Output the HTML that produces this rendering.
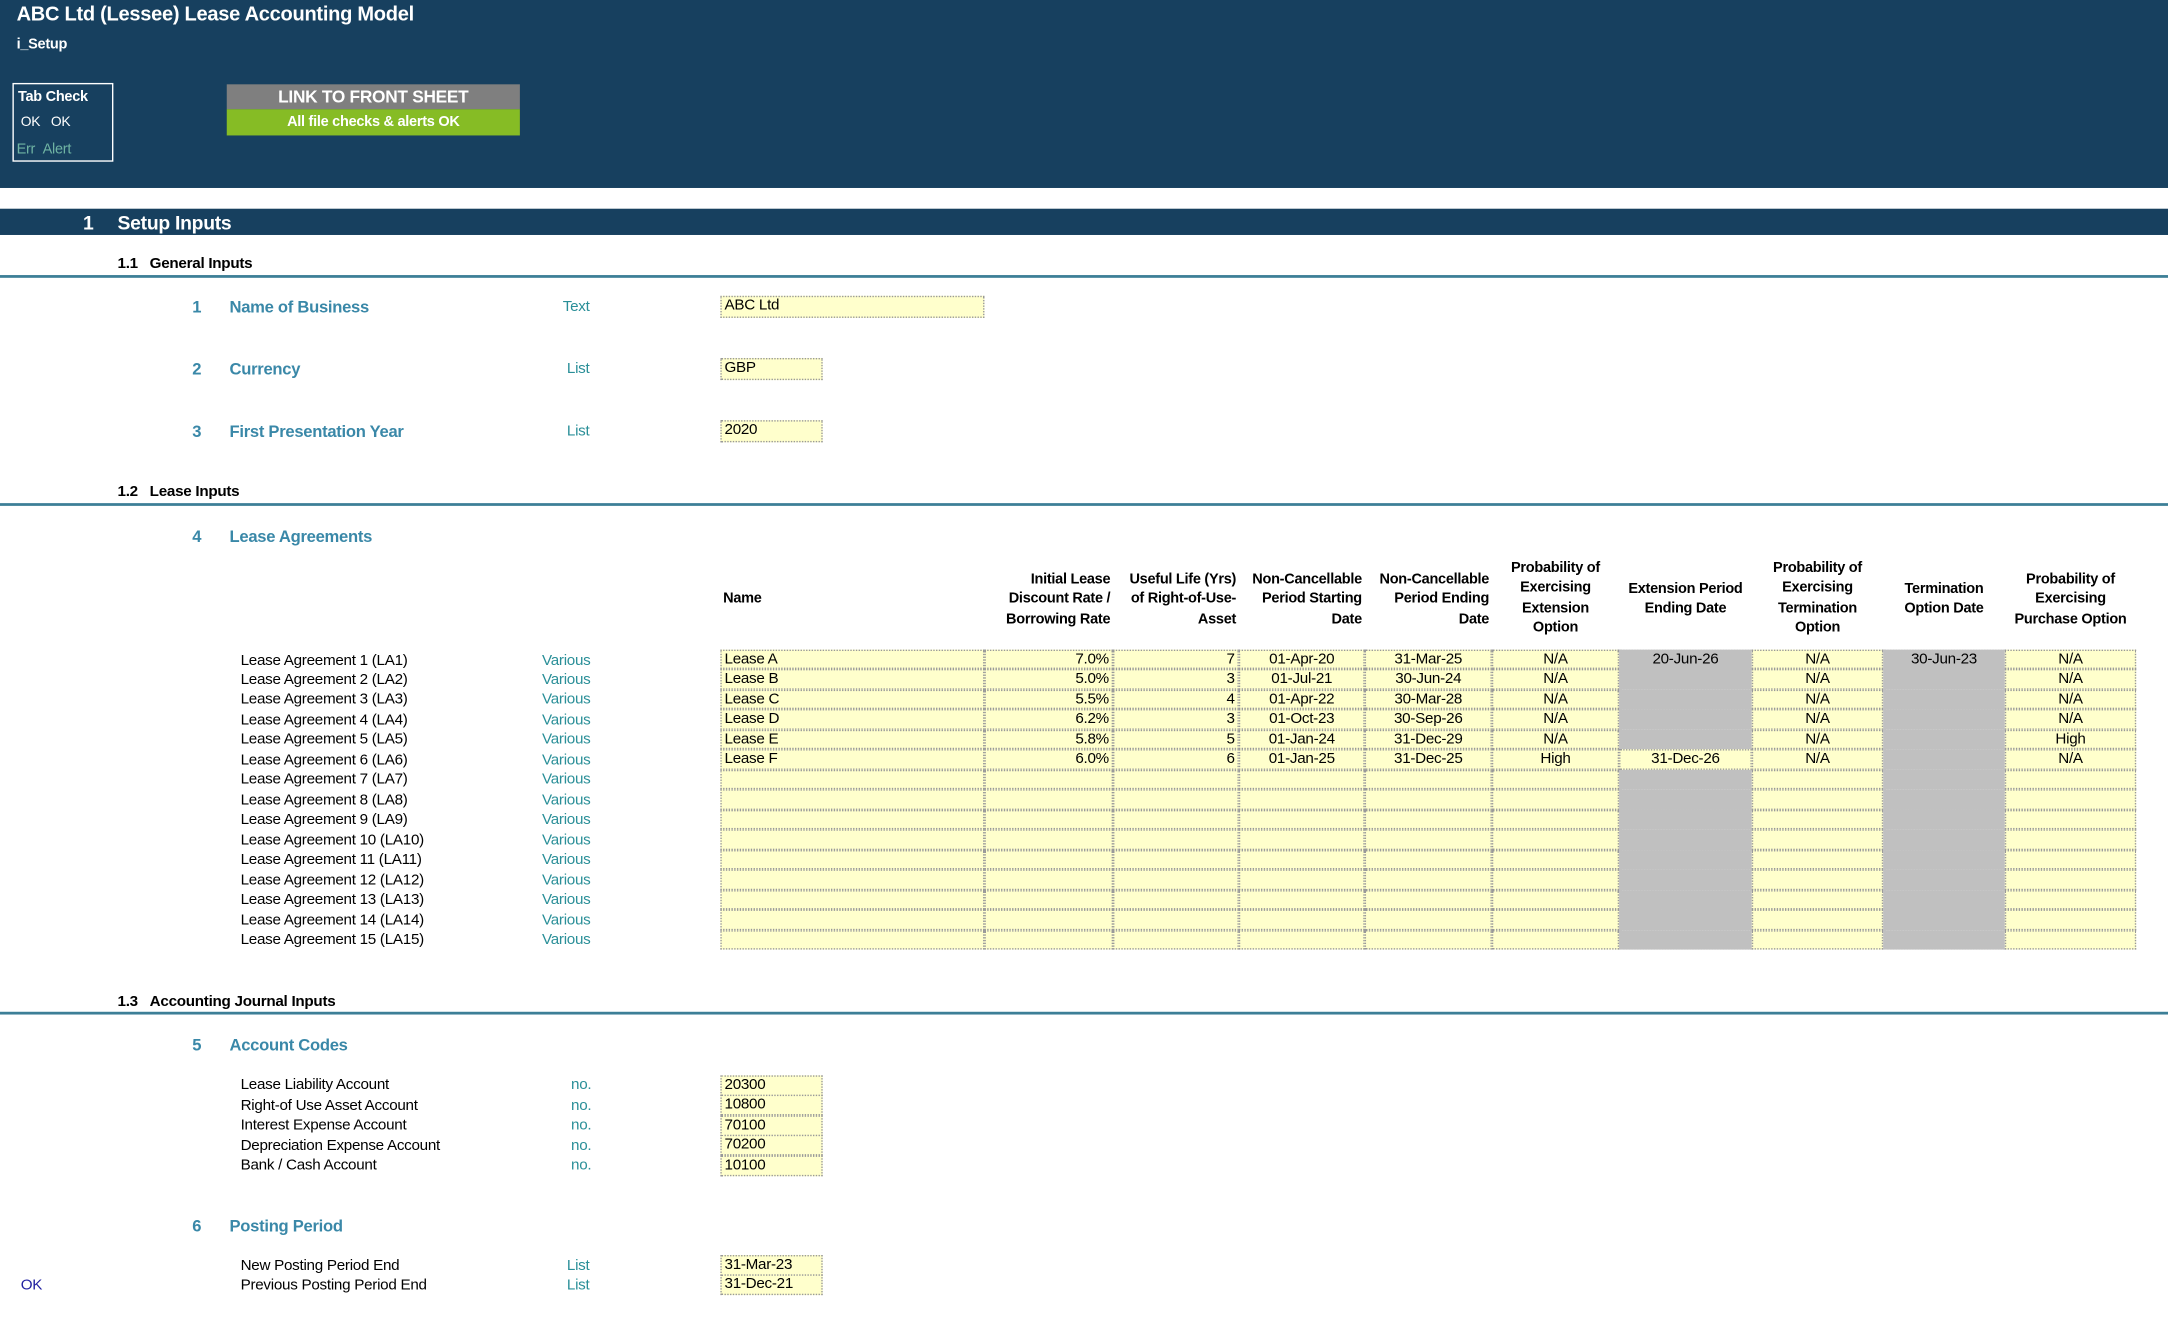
<!DOCTYPE html>
<html><head><meta charset="utf-8">
<style>
html,body{margin:0;padding:0;background:#fff;width:2168px;height:1320px;overflow:hidden}
#w{position:absolute;left:0;top:0;width:1568px;height:955px;transform:scale(1.38265,1.3822);transform-origin:0 0;font-family:"Liberation Sans",Arial,sans-serif;font-size:11px;color:#000;letter-spacing:-0.2px}
.a{position:absolute;white-space:nowrap;line-height:14px}
.b{font-weight:bold}
.lab{color:#3a88a8;font-weight:bold;font-size:12px}
.ty{color:#2a8f98}
.in{position:absolute;background:#ffffcc;border:1px dotted #999;box-sizing:border-box;line-height:13px;padding:0 2px;overflow:hidden;white-space:nowrap}
.g{background:#c0c0c0}
.hd{position:absolute;font-weight:bold;font-size:10.5px;line-height:14.3px;text-align:right}
.c{text-align:center}.r{text-align:right}
.ln{position:absolute;left:0;width:1568px;height:1.5px;background:#3d7f97}
</style></head><body><div id="w">
<div style="position:absolute;left:0;top:0;width:1568px;height:136px;background:#17405f"></div>
<div class="a b" style="left:12px;top:3px;color:#fff;font-size:14.5px;line-height:16px">ABC Ltd (Lessee) Lease Accounting Model</div>
<div class="a b" style="left:12px;top:25px;color:#fff;font-size:10.5px">i_Setup</div>
<div style="position:absolute;left:9px;top:60px;width:73px;height:57px;border:1px solid #fff;box-sizing:border-box"></div>
<div class="a b" style="left:13px;top:63px;color:#fff;font-size:10.5px">Tab Check</div>
<div class="a" style="left:15px;top:82px;color:#fff;font-size:10px">OK&nbsp;&nbsp;&nbsp;OK</div>
<div class="a" style="left:12px;top:101px;color:#6fb3a3;font-size:10.5px">Err&nbsp;&nbsp;Alert</div>
<div style="position:absolute;left:164px;top:61px;width:212px;height:18px;background:#7f7f7f;color:#fff;font-weight:bold;font-size:12.5px;text-align:center;line-height:19px">LINK TO FRONT SHEET</div>
<div style="position:absolute;left:164px;top:79px;width:212px;height:19px;background:#86bc25;color:#fff;font-weight:bold;font-size:10.5px;text-align:center;line-height:19px">All file checks &amp; alerts OK</div>

<div style="position:absolute;left:0;top:151px;width:1568px;height:19px;background:#17405f"></div>
<div class="a b" style="left:60px;top:153px;color:#fff;font-size:14px;line-height:16px">1</div>
<div class="a b" style="left:85px;top:153px;color:#fff;font-size:14px;line-height:16px">Setup Inputs</div>

<div class="a b" style="left:85px;top:184px">1.1&nbsp;&nbsp;&nbsp;General Inputs</div>
<div class="ln" style="top:199px"></div>
<div class="a lab" style="left:139px;top:215px">1</div><div class="a lab" style="left:166px;top:215px">Name of Business</div><div class="a ty" style="left:407px;top:215px">Text</div>
<div class="in" style="left:521px;top:214px;width:191px;height:16px">ABC Ltd</div>
<div class="a lab" style="left:139px;top:260px">2</div><div class="a lab" style="left:166px;top:260px">Currency</div><div class="a ty" style="left:410px;top:260px">List</div>
<div class="in" style="left:521px;top:259px;width:74px;height:16px">GBP</div>
<div class="a lab" style="left:139px;top:305px">3</div><div class="a lab" style="left:166px;top:305px">First Presentation Year</div><div class="a ty" style="left:410px;top:305px">List</div>
<div class="in" style="left:521px;top:304px;width:74px;height:16px">2020</div>

<div class="a b" style="left:85px;top:349px">1.2&nbsp;&nbsp;&nbsp;Lease Inputs</div>
<div class="ln" style="top:364px"></div>
<div class="a lab" style="left:139px;top:381px">4</div><div class="a lab" style="left:166px;top:381px">Lease Agreements</div>

<div class="hd" style="left:523px;top:426px;text-align:left">Name</div>
<div class="hd" style="left:712px;width:91px;top:412px">Initial Lease<br>Discount Rate /<br>Borrowing Rate</div>
<div class="hd" style="left:805px;width:89px;top:412px">Useful Life (Yrs)<br>of Right-of-Use-<br>Asset</div>
<div class="hd" style="left:896px;width:89px;top:412px">Non-Cancellable<br>Period Starting<br>Date</div>
<div class="hd" style="left:987px;width:90px;top:412px">Non-Cancellable<br>Period Ending<br>Date</div>
<div class="hd c" style="left:1079px;width:92px;top:404px">Probability of<br>Exercising<br>Extension<br>Option</div>
<div class="hd c" style="left:1171px;width:96px;top:419px">Extension Period<br>Ending Date</div>
<div class="hd c" style="left:1267px;width:95px;top:404px">Probability of<br>Exercising<br>Termination<br>Option</div>
<div class="hd c" style="left:1362px;width:88px;top:419px">Termination<br>Option Date</div>
<div class="hd c" style="left:1450px;width:95px;top:412px">Probability of<br>Exercising<br>Purchase Option</div>

<div id="rows"></div>

<div class="a b" style="left:85px;top:718px">1.3&nbsp;&nbsp;&nbsp;Accounting Journal Inputs</div>
<div class="ln" style="top:732px"></div>
<div class="a lab" style="left:139px;top:749px">5</div><div class="a lab" style="left:166px;top:749px">Account Codes</div>
<div class="a" style="left:174px;top:778px">Lease Liability Account</div><div class="a ty" style="left:413px;top:778px">no.</div>
<div class="a" style="left:174px;top:793px">Right-of Use Asset Account</div><div class="a ty" style="left:413px;top:793px">no.</div>
<div class="a" style="left:174px;top:807px">Interest Expense Account</div><div class="a ty" style="left:413px;top:807px">no.</div>
<div class="a" style="left:174px;top:822px">Depreciation Expense Account</div><div class="a ty" style="left:413px;top:822px">no.</div>
<div class="a" style="left:174px;top:836px">Bank / Cash Account</div><div class="a ty" style="left:413px;top:836px">no.</div>
<div class="in" style="left:521px;top:778px;width:74px;height:15px">20300</div>
<div class="in" style="left:521px;top:792px;width:74px;height:15px">10800</div>
<div class="in" style="left:521px;top:807px;width:74px;height:15px">70100</div>
<div class="in" style="left:521px;top:821px;width:74px;height:15px">70200</div>
<div class="in" style="left:521px;top:836px;width:74px;height:15px">10100</div>

<div class="a lab" style="left:139px;top:880px">6</div><div class="a lab" style="left:166px;top:880px">Posting Period</div>
<div class="a" style="left:174px;top:909px">New Posting Period End</div><div class="a ty" style="left:410px;top:909px">List</div>
<div class="a" style="left:174px;top:923px">Previous Posting Period End</div><div class="a ty" style="left:410px;top:923px">List</div>
<div class="a" style="left:15px;top:923px;color:#1f1fa0">OK</div>
<div class="in" style="left:521px;top:908px;width:74px;height:15px">31-Mar-23</div>
<div class="in" style="left:521px;top:922px;width:74px;height:15px">31-Dec-21</div>
</div>
<script>
var cols=[521,712,805,896,987,1079,1171,1267,1362,1450,1545];
var al=['l','r','r','c','c','c','c','c','c','c'];
var data=[
['Lease A','7.0%','7','01-Apr-20','31-Mar-25','N/A','20-Jun-26','N/A','30-Jun-23','N/A'],
['Lease B','5.0%','3','01-Jul-21','30-Jun-24','N/A','','N/A','','N/A'],
['Lease C','5.5%','4','01-Apr-22','30-Mar-28','N/A','','N/A','','N/A'],
['Lease D','6.2%','3','01-Oct-23','30-Sep-26','N/A','','N/A','','N/A'],
['Lease E','5.8%','5','01-Jan-24','31-Dec-29','N/A','','N/A','','High'],
['Lease F','6.0%','6','01-Jan-25','31-Dec-25','High','31-Dec-26','N/A','','N/A']];
var h='';
for(var i=0;i<15;i++){
 var y=470+i*14.47;
 h+='<div class="a" style="left:174px;top:'+(y+0.5)+'px">Lease Agreement '+(i+1)+' (LA'+(i+1)+')</div>';
 h+='<div class="a ty" style="left:392px;top:'+(y+0.5)+'px">Various</div>';
 for(var c=0;c<10;c++){
  var t=(data[i]||[])[c]||'';
  var g=(c==8)||(c==6&&i!=5);
  h+='<div class="in'+(g?' g':'')+'" style="left:'+cols[c]+'px;top:'+y+'px;width:'+(cols[c+1]-cols[c])+'px;height:14.47px;text-align:'+(al[c]=='l'?'left':al[c]=='r'?'right':'center')+';'+(g?'border-color:#c0c0c0;':'')+'">'+t+'</div>';
 }
}
document.getElementById('rows').innerHTML=h;
</script>
</body></html>
